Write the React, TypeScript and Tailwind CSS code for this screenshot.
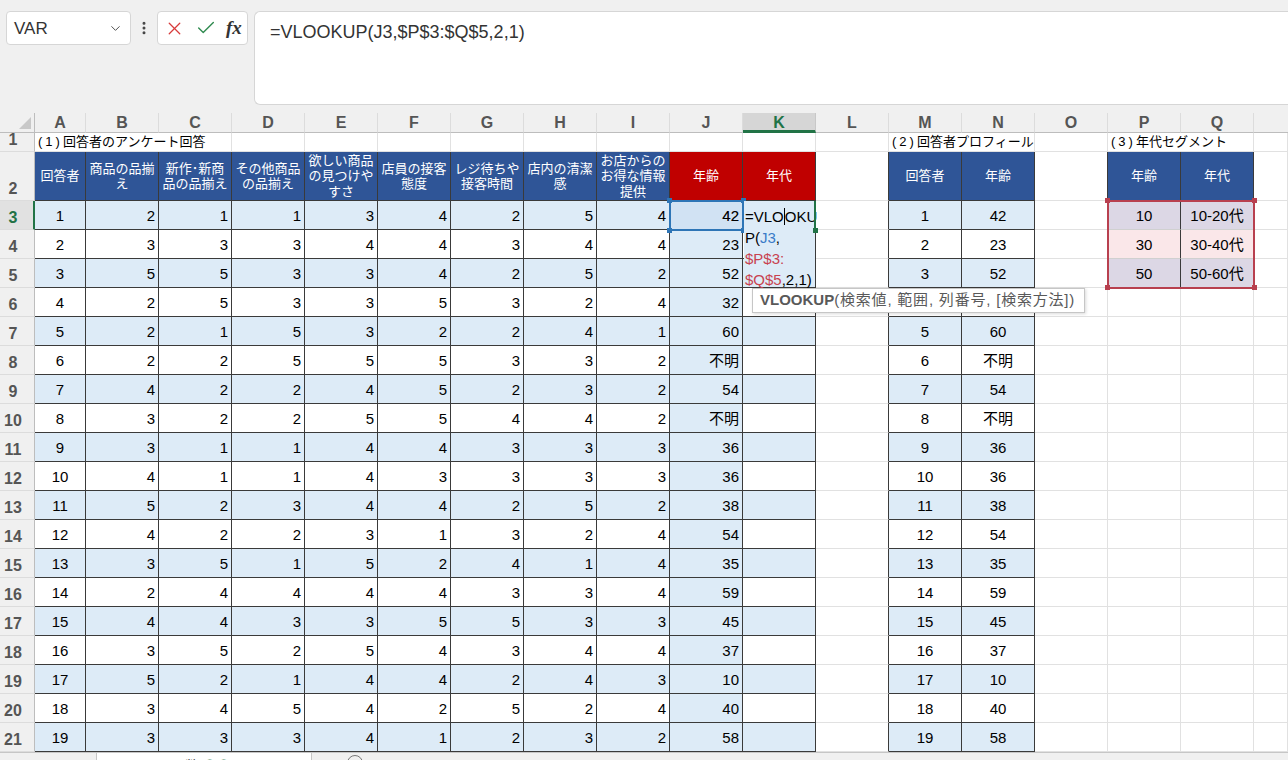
import React from "react";
import { ChevronDown, EllipsisVertical, X, Check } from "lucide-react";

const letters = ["A", "B", "C", "D", "E", "F", "G", "H", "I", "J", "K", "L", "M", "N", "O", "P", "Q"];

const headers: string[][] = [
  ["回答者"],
  ["商品の品揃", "え"],
  ["新作･新商", "品の品揃え"],
  ["その他商品", "の品揃え"],
  ["欲しい商品", "の見つけや", "すさ"],
  ["店員の接客", "態度"],
  ["レジ待ちや", "接客時間"],
  ["店内の清潔", "感"],
  ["お店からの", "お得な情報", "提供"],
];

// 回答者, B..I 評価, 年齢
const answers: (number | string)[][] = [
  [1, 2, 1, 1, 3, 4, 2, 5, 4, 42],
  [2, 3, 3, 3, 4, 4, 3, 4, 4, 23],
  [3, 5, 5, 3, 3, 4, 2, 5, 2, 52],
  [4, 2, 5, 3, 3, 5, 3, 2, 4, 32],
  [5, 2, 1, 5, 3, 2, 2, 4, 1, 60],
  [6, 2, 2, 5, 5, 5, 3, 3, 2, "不明"],
  [7, 4, 2, 2, 4, 5, 2, 3, 2, 54],
  [8, 3, 2, 2, 5, 5, 4, 4, 2, "不明"],
  [9, 3, 1, 1, 4, 4, 3, 3, 3, 36],
  [10, 4, 1, 1, 4, 3, 3, 3, 3, 36],
  [11, 5, 2, 3, 4, 4, 2, 5, 2, 38],
  [12, 4, 2, 2, 3, 1, 3, 2, 4, 54],
  [13, 3, 5, 1, 5, 2, 4, 1, 4, 35],
  [14, 2, 4, 4, 4, 4, 3, 3, 4, 59],
  [15, 4, 4, 3, 3, 5, 5, 3, 3, 45],
  [16, 3, 5, 2, 5, 4, 3, 4, 4, 37],
  [17, 5, 2, 1, 4, 4, 2, 4, 3, 10],
  [18, 3, 4, 5, 4, 2, 5, 2, 4, 40],
  [19, 3, 3, 3, 4, 1, 2, 3, 2, 58],
];

const segments: [number, string][] = [
  [10, "10-20代"],
  [30, "30-40代"],
  [50, "50-60代"],
];

// cell styles
const blank = "border-r border-b border-[#e1e1e1] bg-white";
const blankEdge = "border-r border-b border-r-[#3a3a3a] border-b-[#e1e1e1] bg-white";
const headBlue =
  "flex flex-col items-center justify-center border-r border-b border-[#3a3a3a] bg-[#2f5597] text-[13px] leading-[15.5px] text-white";
const headRed =
  "flex flex-col items-center justify-center border-r border-b border-[#3a3a3a] bg-[#c00000] text-[13px] leading-[15.5px] text-white";
const bodyBlue = "flex items-center pt-[2px] border-r border-b border-[#3a3a3a] bg-[#ddebf7] text-[15px]";
const bodyWhite = "flex items-center pt-[2px] border-r border-b border-[#3a3a3a] bg-white text-[15px]";
const segDark = "flex items-center justify-center pt-[2px] border-r border-b border-r-[#3a3a3a] border-b-[#d0d0d0] bg-[#dcd7e5] text-[15px]";
const segPink = "flex items-center justify-center pt-[2px] border-r border-b border-r-[#3a3a3a] border-b-[#d0d0d0] bg-[#fae7e9] text-[15px]";
const right = " justify-end pr-[3px]";
const center = " justify-center";
const title =
  "flex items-end pb-[1px] pl-[3px] border-r border-b border-[#e1e1e1] bg-white text-[13px] leading-[17px] whitespace-nowrap";

function Title({ n, text }: { n: number; text: string }) {
  return (
    <>
      <span className="font-['Liberation_Sans'] tracking-[3px]">({n})</span>
      {text}
    </>
  );
}

function RowHead({ n }: { n: number }) {
  if (n === 3) {
    return (
      <div className="flex items-end justify-center pr-[7px] pb-[2px] border-b border-r-2 border-b-[#dcdcdc] border-r-[#217346] bg-[#e1e1e1] text-[16px] leading-[18px] font-semibold text-[#217346]">
        {n}
      </div>
    );
  }
  return (
    <div className="flex items-end justify-center pr-[8px] pb-[2px] border-r border-b border-r-[#bdbdbd] border-b-[#dcdcdc] bg-[#f0f0f0] text-[16px] leading-[18px] font-semibold text-[#555]">
      {n}
    </div>
  );
}

function Sheet() {
  const cells: React.ReactNode[] = [];

  // column header row
  cells.push(
    <div key="corner" className="relative border-r border-b border-r-[#bdbdbd] border-b-[#bdbdbd] bg-[#f0f0f0]">
      <svg className="absolute right-[3px] bottom-[3px]" width="12" height="12" viewBox="0 0 12 12">
        <polygon points="12,0 12,12 0,12" fill="#c8c8c8" />
      </svg>
    </div>
  );
  letters.forEach((l) => {
    if (l === "K") {
      cells.push(
        <div
          key={"h" + l}
          className="flex items-center justify-center pt-[2px] border-r border-b-[3px] border-r-[#c8c8c8] border-b-[#217346] bg-[#d6d6d6] text-[16px] font-semibold text-[#217346]"
        >
          {l}
        </div>
      );
    } else {
      cells.push(
        <div
          key={"h" + l}
          className="flex items-center justify-center pt-[1px] border-r border-b border-r-[#dcdcdc] border-b-[#bdbdbd] bg-[#f0f0f0] text-[16px] font-semibold text-[#555]"
        >
          {l}
        </div>
      );
    }
  });
  cells.push(<div key="hR" className="border-b border-b-[#bdbdbd] bg-[#f0f0f0]" />);

  // row 1 titles
  cells.push(<RowHead key="r1" n={1} />);
  cells.push(
    <div key="t1" className={title + " col-span-3"}>
      <Title n={1} text="回答者のアンケート回答" />
    </div>
  );
  for (let c = 3; c <= 11; c++) cells.push(<div key={"r1c" + c} className={blank} />);
  cells.push(
    <div key="t2" className={title + " col-span-2"}>
      <Title n={2} text="回答者プロフィール" />
    </div>
  );
  cells.push(<div key="r1O" className={blank} />);
  cells.push(
    <div key="t3" className={title + " col-span-2"}>
      <Title n={3} text="年代セグメント" />
    </div>
  );
  cells.push(<div key="r1R" className={blank} />);

  // row 2 headers
  cells.push(<RowHead key="r2" n={2} />);
  headers.forEach((lines, i) => {
    cells.push(
      <div key={"hd" + i} className={headBlue}>
        {lines.map((t) => (
          <span key={t}>{t}</span>
        ))}
      </div>
    );
  });
  cells.push(
    <div key="hdJ" className={headRed}>
      年齢
    </div>
  );
  cells.push(
    <div key="hdK" className={headRed}>
      年代
    </div>
  );
  cells.push(<div key="hdL" className={blankEdge} />);
  cells.push(
    <div key="hdM" className={headBlue}>
      回答者
    </div>
  );
  cells.push(
    <div key="hdN" className={headBlue}>
      年齢
    </div>
  );
  cells.push(<div key="hdO" className={blankEdge} />);
  cells.push(
    <div key="hdP" className={headBlue}>
      年齢
    </div>
  );
  cells.push(
    <div key="hdQ" className={headBlue}>
      年代
    </div>
  );
  cells.push(<div key="hdR" className={blank} />);

  // data rows
  answers.forEach((row, i) => {
    const r = i + 3;
    const body = i % 2 === 0 ? bodyBlue : bodyWhite;
    cells.push(<RowHead key={"r" + r} n={r} />);
    cells.push(
      <div key={r + "A"} className={body + center}>
        {row[0]}
      </div>
    );
    for (let c = 1; c <= 8; c++) {
      cells.push(
        <div key={r + "-" + c} className={body + right}>
          {row[c]}
        </div>
      );
    }
    cells.push(
      <div key={r + "J"} className={bodyBlue + right}>
        {row[9]}
      </div>
    );
    cells.push(<div key={r + "K"} className={body} />);
    cells.push(<div key={r + "L"} className={blankEdge} />);
    cells.push(
      <div key={r + "M"} className={body + center}>
        {row[0]}
      </div>
    );
    cells.push(
      <div key={r + "N"} className={body + center}>
        {row[9]}
      </div>
    );
    if (i < 3) {
      const seg = i === 1 ? segPink : segDark;
      cells.push(<div key={r + "O"} className={blankEdge} />);
      cells.push(
        <div key={r + "P"} className={seg}>
          {segments[i][0]}
        </div>
      );
      cells.push(
        <div key={r + "Q"} className={seg}>
          {segments[i][1]}
        </div>
      );
    } else {
      cells.push(<div key={r + "O"} className={blank} />);
      cells.push(<div key={r + "P"} className={blank} />);
      cells.push(<div key={r + "Q"} className={blank} />);
    }
    cells.push(<div key={r + "R"} className={blank} />);
  });

  return (
    <div className="relative grid grid-cols-[35px_51px_repeat(16,73px)_1fr] grid-rows-[20px_19px_49px_repeat(19,29px)] font-['Liberation_Sans','Noto_Sans_CJK_JP',sans-serif] text-black">
      {cells}

      {/* J3: referenced cell */}
      <div className="absolute left-[669px] top-[87px] h-[31px] w-[75px] border-2 border-[#2e75b6] bg-[#c9dcf0]/60" />
      <div className="absolute left-[667px] top-[85px] h-[5px] w-[5px] bg-[#2e75b6]" />
      <div className="absolute left-[741px] top-[85px] h-[5px] w-[5px] bg-[#2e75b6]" />
      <div className="absolute left-[667px] top-[115px] h-[5px] w-[5px] bg-[#2e75b6]" />
      <div className="absolute left-[741px] top-[115px] h-[5px] w-[5px] bg-[#2e75b6]" />
      <div className="absolute left-[669px] top-[88px] flex h-[29px] w-[73px] items-center justify-end pt-[2px] pr-[3px] text-[15px]">
        42
      </div>

      {/* K3: in-cell editor */}
      <div className="absolute left-[744px] top-[88px] h-[86px] w-[71px] bg-[#ddebf7] pt-[4px] pl-[1px] text-[15px] leading-[21px] whitespace-nowrap">
        <div>
          =VLO<span className="inline-block h-[17px] w-px translate-y-[3px] bg-black" />OKU
        </div>
        <div>
          P(<span className="text-[#3a7bc8]">J3</span>,
        </div>
        <div className="text-[#c8424f]">$P$3:</div>
        <div>
          <span className="text-[#c8424f]">$Q$5</span>,2,1)
        </div>
      </div>
      <div className="absolute left-[814px] top-[88px] h-[29px] w-[2px] bg-[#217346]" />
      <div className="absolute left-[813px] top-[115px] h-[5px] w-[5px] bg-[#217346]" />

      {/* P3:Q5: referenced range */}
      <div className="absolute left-[1107px] top-[87px] h-[89px] w-[148px] border-2 border-[#b8404f]" />
      <div className="absolute left-[1105px] top-[85px] h-[5px] w-[5px] bg-[#b8404f]" />
      <div className="absolute left-[1252px] top-[85px] h-[5px] w-[5px] bg-[#b8404f]" />
      <div className="absolute left-[1105px] top-[172px] h-[5px] w-[5px] bg-[#b8404f]" />
      <div className="absolute left-[1252px] top-[172px] h-[5px] w-[5px] bg-[#b8404f]" />

      {/* function tooltip */}
      <div className="absolute left-[752px] top-[175px] flex h-[25px] w-[333px] items-center border border-[#c6c6c6] bg-white pl-[7px] text-[15px] text-[#595959] shadow-[1px_1px_3px_rgba(0,0,0,0.15)] whitespace-nowrap">
        <span className="font-bold">VLOOKUP</span>
        <span className="tracking-[0.8px]">(検索値, 範囲, 列番号, [検索方法])</span>
      </div>
    </div>
  );
}

export default function App() {
  return (
    <div className="flex h-[760px] w-[1288px] flex-col overflow-hidden bg-[#f0f0f0] font-['Liberation_Sans','Noto_Sans_CJK_JP',sans-serif]">
      {/* formula toolbar */}
      <div className="flex h-[113px] shrink-0 items-start pt-[11px] pl-[6px]">
        <div className="flex h-[34px] w-[125px] items-center justify-between rounded-[4px] border border-[#d6d6d6] bg-white pr-[7px] pl-[7px] text-[17px] text-[#333]">
          <span className="pt-[1px]">VAR</span>
          <ChevronDown size={15} strokeWidth={1.5} className="text-[#444]" />
        </div>
        <div className="flex h-[34px] w-[26px] items-center justify-center">
          <EllipsisVertical size={16} strokeWidth={2.5} className="text-[#444]" />
        </div>
        <div className="flex h-[34px] w-[91px] items-center rounded-[4px] border border-[#d6d6d6] bg-white pl-[6px]">
          <X size={21} strokeWidth={1.5} className="text-[#d83b3b]" />
          <Check size={22} strokeWidth={1.5} className="ml-[10px] text-[#2f8a4f]" />
          <span className="ml-[9px] font-['Liberation_Serif',serif] text-[19px] font-bold italic text-[#333]">fx</span>
        </div>
        <div className="ml-[6px] h-[94px] flex-1 rounded-l-[6px] border border-r-0 border-[#d6d6d6] bg-white pt-[7px] pl-[15px] text-[18px] text-[#333]">
          =VLOOKUP(J3,$P$3:$Q$5,2,1)
        </div>
      </div>

      <Sheet />

      {/* sheet tabs (mostly cut off) */}
      <div className="relative flex h-[8px] shrink-0 overflow-hidden border-t border-[#c6c6c6] bg-[#f0f0f0]">
        <div className="ml-[96px] w-[216px] border-r border-l border-[#c6c6c6] bg-white pt-[4px] pl-[7px] text-[14px] leading-[18px] whitespace-nowrap text-[#333]">
          vlookup-ifs関数 <span className="text-[#217346]">◎◎if</span>
        </div>
        <div className="absolute top-[2px] left-[347px] h-[16px] w-[16px] rounded-full border border-[#777]" />
      </div>
    </div>
  );
}
